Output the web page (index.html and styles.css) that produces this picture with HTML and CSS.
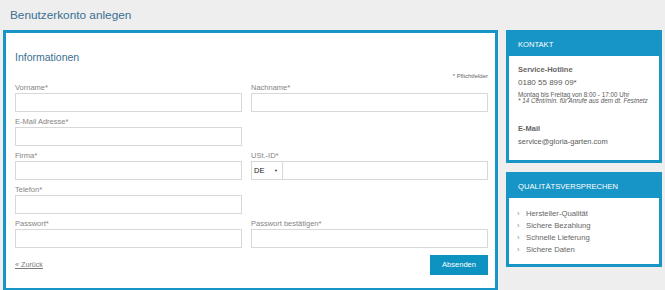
FILE: index.html
```html
<!DOCTYPE html>
<html lang="de">
<head>
  <meta charset="UTF-8" />
  <meta name="viewport" content="width=device-width, initial-scale=1.0"/>
  <title>Benutzerkonto anlegen</title>
  <link rel="stylesheet" href="styles.css">
</head>
<body>

  <div class="page">
    <header class="page-head">
      <h1>Benutzerkonto anlegen</h1>
    </header>

    <div class="layout">
      <main class="form-box">
        <h2>Informationen</h2>
        <p class="required">* Pflichtfelder</p>

        <div class="fields">
          <div class="field">
            <label>Vorname*</label>
            <input type="text" />
          </div>
          <div class="field">
            <label>Nachname*</label>
            <input type="text" />
          </div>

          <div class="field">
            <label>E-Mail Adresse*</label>
            <input type="text" />
          </div>
          <div></div>

          <div class="field">
            <label>Firma*</label>
            <input type="text" />
          </div>
          <div class="field">
            <label>USt.-ID*</label>
            <div class="vat-row">
              <div class="country-select">DE <span class="caret">&#9660;</span></div>
              <input type="text" />
            </div>
          </div>

          <div class="field">
            <label>Telefon*</label>
            <input type="text" />
          </div>
          <div></div>

          <div class="field">
            <label>Passwort*</label>
            <input type="password" />
          </div>
          <div class="field">
            <label>Passwort bestätigen*</label>
            <input type="password" />
          </div>
        </div>

        <div class="form-foot">
          <a href="#" class="back-link">« Zurück</a>
          <button type="submit">Absenden</button>
        </div>
      </main>

      <aside class="sidebar">
        <section class="side-box">
          <h3>Kontakt</h3>
          <div class="side-body contact">
            <div class="contact-title">Service-Hotline</div>
            <div class="contact-line phone">0180 55 899 09*</div>
            <div class="contact-small">
              Montag bis Freitag von 8:00 - 17:00 Uhr<br>
              <em>* 14 Cent/min. für Anrufe aus dem dt. Festnetz</em>
            </div>
            <div class="contact-title mail">E-Mail</div>
            <div class="contact-line">service@gloria-garten.com</div>
          </div>
        </section>

        <section class="side-box">
          <h3>Qualitätsversprechen</h3>
          <ul class="side-body promise-list">
            <li>Hersteller-Qualität</li>
            <li>Sichere Bezahlung</li>
            <li>Schnelle Lieferung</li>
            <li>Sichere Daten</li>
          </ul>
        </section>
      </aside>
    </div>
  </div>

</body>
</html>
```

FILE: styles.css
```css
:root {
  --primary-color: #1795c6;
  --title-color: #3b6f92;
  --label-color: #858585;
  --text-color: #5a5a5a;
  --border-color: #d8d8d8;
  --background-color: #eeeeee;
}

body {
  background: var(--background-color);
  font-family: 'Liberation Sans', Arial, sans-serif;
  margin: 0;
  padding: 0;
}

.page {
  padding: 0 3px;
}

.page-head h1 {
  margin: 0;
  padding-left: 7px;
  height: 30px;
  line-height: 30px;
  font-size: 11.8px;
  font-weight: 400;
  color: var(--title-color);
}

.layout {
  display: flex;
  gap: 8px;
  align-items: flex-start;
}

/* main form */

.form-box {
  width: 495px;
  box-sizing: border-box;
  background: #ffffff;
  border: 3px solid var(--primary-color);
  padding: 18px 7px 13px 9px;
}

.form-box h2 {
  margin: 0;
  font-size: 10.5px;
  line-height: 13px;
  font-weight: 400;
  color: var(--title-color);
}

.required {
  margin: 8px 0 2px;
  text-align: right;
  font-size: 6px;
  line-height: 8px;
  color: #666;
}

.fields {
  display: grid;
  grid-template-columns: 227px 1fr;
  column-gap: 9px;
  row-gap: 4.5px;
}

.field label {
  display: block;
  font-size: 7.5px;
  line-height: 11px;
  color: var(--label-color);
}

.field input {
  display: block;
  width: 100%;
  height: 18.5px;
  box-sizing: border-box;
  margin: 0;
  padding: 0 4px;
  border: 1px solid var(--border-color);
  background: #fff;
  font-family: inherit;
  font-size: 8px;
  outline: none;
}

.vat-row {
  display: flex;
}

.country-select {
  flex: 0 0 31px;
  height: 18.5px;
  box-sizing: border-box;
  border: 1px solid var(--border-color);
  border-right: none;
  padding-left: 2px;
  font-size: 7.5px;
  line-height: 17px;
  color: #222;
  display: flex;
  justify-content: space-between;
  padding-right: 4px;
}

.caret {
  font-size: 4px;
  color: #333;
}

.vat-row input {
  flex: 1;
  min-width: 0;
}

.form-foot {
  display: flex;
  justify-content: space-between;
  align-items: center;
  margin-top: 7px;
}

.back-link {
  font-size: 7.2px;
  color: #7a7a7a;
  text-decoration: underline;
}

button {
  width: 58px;
  height: 20px;
  padding: 0;
  border: none;
  background-color: #0e93c1;
  color: #ffffff;
  font-family: inherit;
  font-size: 7.5px;
  cursor: pointer;
}

/* sidebar */

.sidebar {
  width: 156px;
  display: flex;
  flex-direction: column;
  gap: 9px;
}

.side-box {
  background: var(--primary-color);
  padding: 0 3px 3px;
}

.side-box h3 {
  margin: 0;
  padding: 4px 0 0 9px;
  line-height: 22px;
  font-size: 7.6px;
  font-weight: 400;
  text-transform: uppercase;
  color: #ffffff;
}

.side-body {
  background: #ffffff;
  margin: 0;
  padding: 8px 6px 12.5px 9px;
  color: var(--text-color);
}

.contact-title {
  font-size: 7.5px;
  line-height: 11px;
  font-weight: 700;
  color: #666;
}

.contact-title.mail {
  margin-top: 18px;
}

.contact-line {
  margin-top: 2.5px;
  font-size: 7.5px;
  line-height: 11px;
}

.contact-line.phone {
  margin-top: 1.5px;
  font-size: 8px;
}

.contact-small {
  margin-top: 4px;
  font-size: 6.3px;
  line-height: 6.5px;
  white-space: nowrap;
}

.promise-list {
  list-style: none;
  padding: 10px 9px 8px 8px;
}

.promise-list li {
  font-size: 7.7px;
  line-height: 12px;
  color: #666;
}

.promise-list li::before {
  content: '›';
  display: inline-block;
  width: 9px;
  color: #8a8a8a;
}
```
